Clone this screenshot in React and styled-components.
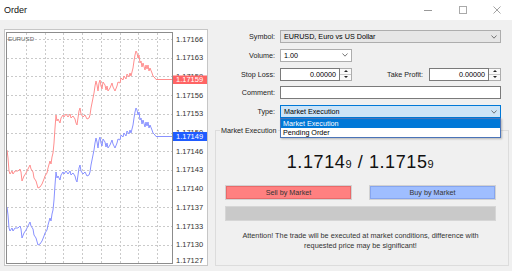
import React from "react";
import styled, { createGlobalStyle } from "styled-components";

const GlobalStyle = createGlobalStyle`
  html, body {
    margin: 0;
    padding: 0;
    background: #f0f0f0;
  }
  body {
    font-family: "Liberation Sans", Arial, sans-serif;
  }
  * {
    box-sizing: border-box;
  }
`;

const Window = styled.div`
  width: 512px;
  height: 271px;
  display: flex;
  flex-direction: column;
  background: #f0f0f0;
  overflow: hidden;
`;

const TitleBar = styled.div`
  height: 20px;
  flex: none;
  display: flex;
  align-items: center;
  padding-left: 4px;
  background: #ffffff;
`;

const Title = styled.span`
  flex: 1;
  font-size: 9px;
  color: #111;
`;

const Controls = styled.div`
  display: flex;
  align-items: center;
  gap: 26.5px;
  padding-right: 11px;
`;

const Body = styled.div`
  flex: 1;
  display: flex;
  padding: 9px 0 5px 4px;
`;

const ChartPanel = styled.div`
  width: 204px;
  height: 237px;
  flex: none;
  background: #ffffff;
  border: 1px solid #c6c6c6;
`;

const FormPanel = styled.div`
  flex: 1;
  display: flex;
  flex-direction: column;
  margin-top: 1px;
  padding-left: 7px;
  font-size: 7.2px;
  color: #222;
`;

const Form = styled.div`
  display: flex;
  flex-direction: column;
  gap: 5.75px;
`;

const Row = styled.div`
  display: flex;
  align-items: center;
  height: 13px;
`;

const Label = styled.span`
  width: ${(p) => p.$width || 65}px;
  padding-right: ${(p) => p.$pad ?? 5}px;
  text-align: right;
  flex: none;
`;

const Field = styled.div`
  position: relative;
  width: ${(p) => p.$width}px;
  height: 13px;
  flex: none;
  display: flex;
  align-items: center;
  justify-content: ${(p) => (p.$right ? "flex-end" : "space-between")};
  padding: 0 3px 0 3px;
  background: ${(p) => p.$bg || "#ffffff"};
  border: 1px solid ${(p) => p.$border || "#7a7a7a"};
  color: #000;
`;

const SpinGroup = styled.div`
  display: flex;
  flex: none;
`;

const Spin = styled.div`
  width: 12px;
  height: 13px;
  display: flex;
  flex-direction: column;
  border: 1px solid #adadad;
  border-left: none;
  background: #fafafa;
`;

const SpinHalf = styled.div`
  flex: 1;
  display: flex;
  align-items: center;
  justify-content: center;
  border-top: ${(p) => (p.$down ? "1px solid #c8c8c8" : "none")};
  &::after {
    content: "";
    border-left: 2px solid transparent;
    border-right: 2px solid transparent;
    ${(p) =>
      p.$down
        ? "border-top: 2px solid #222;"
        : "border-bottom: 2px solid #222;"}
  }
`;

const DropList = styled.div`
  position: absolute;
  top: 12px;
  left: -1px;
  right: -1px;
  z-index: 2;
  background: #ffffff;
  border: 1px solid #4a74b8;
  box-shadow: 1px 1px 2px rgba(0, 0, 0, 0.25);
`;

const DropItem = styled.div`
  height: 9px;
  line-height: 9px;
  padding-left: 2px;
  background: ${(p) => (p.$active ? "#0078d7" : "#ffffff")};
  color: ${(p) => (p.$active ? "#ffffff" : "#000000")};
`;

const GroupBox = styled.div`
  position: relative;
  margin-top: 12px;
  margin-right: 3px;
  height: 136px;
  display: flex;
  flex-direction: column;
  padding: 0 12px 0 9px;
  border: 1px solid #dcdcdc;
`;

const Legend = styled.span`
  position: absolute;
  top: -5.5px;
  left: 4px;
  padding: 0 1px;
  line-height: 10px;
  background: #f0f0f0;
  color: #222;
`;

const Quote = styled.div`
  margin-top: 21px;
  height: 20px;
  line-height: 20px;
  text-align: center;
  font-size: 18px;
  letter-spacing: 0.6px;
  color: #111;
`;

const Pip = styled.span`
  font-size: 11px;
`;

const ButtonRow = styled.div`
  margin-top: 13px;
  display: flex;
  justify-content: space-between;
`;

const TradeButton = styled.div`
  width: 127px;
  height: 15px;
  display: flex;
  align-items: center;
  justify-content: center;
  background: ${(p) => (p.$buy ? "#9fbeff" : "#ff8080")};
  border: 1px solid #d2d2d2;
  box-shadow: inset 0 0 0 1px ${(p) => (p.$buy ? "#86a5ee" : "#e86a6a")};
  color: #333;
`;

const Progress = styled.div`
  margin-top: 6px;
  height: 15px;
  background: #c9c9c9;
  border: 1px solid #d6d6d6;
`;

const Notice = styled.div`
  margin-top: 10px;
  text-align: center;
  line-height: 10px;
  font-size: 7.3px;
  color: #333;
`;

const Chevron = () => (
  <svg width="6" height="4" viewBox="0 0 6 4">
    <polyline points="0.5,0.5 3,3.2 5.5,0.5" fill="none" stroke="#555" strokeWidth="0.8" />
  </svg>
);

// bid line, page coordinates
const bid = [
  [7, 207], [8, 215], [9, 228], [10, 231], [12, 228], [13, 231], [15, 228], [18, 228],
  [20, 226], [21, 229], [22, 238], [24, 233], [26, 230], [28, 226], [30, 222], [31, 226],
  [33, 229], [34, 235], [36, 238], [38, 245], [40, 244], [42, 241], [44, 236], [45, 233],
  [47, 230], [48, 225], [50, 218], [51, 221], [52, 214], [53, 210], [54, 200], [55, 185],
  [56, 172], [57, 178], [58, 176], [60, 180], [61, 175], [63, 172], [64, 174], [66, 171],
  [68, 174], [70, 171], [71, 175], [73, 173], [75, 176], [76, 180], [77, 182], [78, 175],
  [79, 168], [80, 165], [81, 171], [83, 174], [85, 172], [87, 176], [89, 175], [90, 172],
  [91, 165], [92, 160], [93, 155], [94, 150], [95, 143], [96, 138], [97, 142], [98, 148],
  [99, 140], [100, 137], [101, 143], [102, 146], [103, 139], [105, 142], [106, 147],
  [107, 143], [108, 148], [110, 145], [112, 140], [113, 144], [115, 148], [117, 143],
  [118, 139], [120, 140], [121, 135], [123, 137], [124, 133], [126, 136], [127, 131],
  [129, 134], [130, 130], [131, 133], [133, 125], [134, 118], [135, 112], [136, 108],
  [137, 110], [138, 115], [139, 112], [140, 120], [141, 118], [142, 124], [143, 120],
  [145, 127], [146, 122], [147, 126], [148, 122], [149, 128], [150, 125], [152, 130],
  [153, 133], [155, 135], [156, 136.5], [172, 136.5],
];

const levels = [
  "1.17166", "1.17163", "1.17159", "1.17156", "1.17153", "1.17150", "1.17146",
  "1.17143", "1.17140", "1.17137", "1.17133", "1.17130", "1.17127",
];

const toPoints = (shift) =>
  bid.map(([x, y]) => `${x - 5},${y - 30 - shift}`).join(" ");

const Chart = () => (
  <svg width="202" height="235" viewBox="0 0 202 235" style={{ display: "block" }}>
    <defs>
      <clipPath id="plot">
        <rect x="1.5" y="2.5" width="166" height="231" />
      </clipPath>
    </defs>
    <g stroke="#cacaca" strokeWidth="1" strokeDasharray="2 2">
      {levels.slice(0, 12).map((_, i) => (
        <line key={i} x1="2" x2="167" y1={Math.round(9 + 18.7 * i) + 0.5} y2={Math.round(9 + 18.7 * i) + 0.5} />
      ))}
      {Array.from({ length: 8 }).map((_, j) => (
        <line key={j} y1="3" y2="233" x1={Math.round(21 + 18.7 * j) + 0.5} x2={Math.round(21 + 18.7 * j) + 0.5} />
      ))}
    </g>
    <g clipPath="url(#plot)" fill="none" strokeWidth="1">
      <polyline points={toPoints(57)} stroke="#ff8e8e" />
      <polyline points={toPoints(0)} stroke="#8891ff" />
    </g>
    <rect x="1.5" y="2.5" width="166" height="231" fill="none" stroke="#8c8c8c" />
    <text x="3" y="8" fontSize="6.2" fill="#666" fontFamily="Liberation Sans, sans-serif" dominantBaseline="central">
      EURUSD
    </text>
    <g fontSize="7.5" fill="#333" fontFamily="Liberation Sans, sans-serif">
      {levels.map((l, i) => (
        <text key={l} x="171" y={Math.min(9 + 18.7 * i, 230.6)} dominantBaseline="central">
          {l}
        </text>
      ))}
    </g>
    <rect x="168" y="45.5" width="34" height="8.5" fill="#ff6464" />
    <text x="171" y="49.9" fontSize="7.5" fill="#fff" fontFamily="Liberation Sans, sans-serif" dominantBaseline="central">
      1.17159
    </text>
    <rect x="168" y="102" width="34" height="9" fill="#1f5cff" />
    <text x="171" y="106.6" fontSize="7.5" fill="#fff" fontFamily="Liberation Sans, sans-serif" dominantBaseline="central">
      1.17149
    </text>
  </svg>
);

const SpinField = ({ value }) => (
  <SpinGroup>
    <Field $width={60} $right>
      {value}
    </Field>
    <Spin>
      <SpinHalf />
      <SpinHalf $down />
    </Spin>
  </SpinGroup>
);

export default function App() {
  return (
    <>
      <GlobalStyle />
      <Window>
        <TitleBar>
          <Title>Order</Title>
          <Controls>
            <svg width="8" height="8" viewBox="0 0 8 8">
              <line x1="0" x2="8" y1="4.5" y2="4.5" stroke="#999" />
            </svg>
            <svg width="8" height="8" viewBox="0 0 8 8">
              <rect x="0.5" y="0.5" width="7" height="7" fill="none" stroke="#aaa" />
            </svg>
            <svg width="8" height="8" viewBox="0 0 8 8">
              <path d="M0.5 0.5 L7.5 7.5 M7.5 0.5 L0.5 7.5" stroke="#999" strokeWidth="0.9" />
            </svg>
          </Controls>
        </TitleBar>
        <Body>
          <ChartPanel>
            <Chart />
          </ChartPanel>
          <FormPanel>
            <Form>
              <Row>
                <Label>Symbol:</Label>
                <Field $width={221} $bg="#e6e6e6" $border="#adadad">
                  <span>EURUSD, Euro vs US Dollar</span>
                  <Chevron />
                </Field>
              </Row>
              <Row>
                <Label>Volume:</Label>
                <Field $width={72} $border="#adadad">
                  <span>1.00</span>
                  <Chevron />
                </Field>
              </Row>
              <Row>
                <Label>Stop Loss:</Label>
                <SpinField value="0.00000" />
                <Label $width={77} $pad={6}>
                  Take Profit:
                </Label>
                <SpinField value="0.00000" />
              </Row>
              <Row>
                <Label>Comment:</Label>
                <Field $width={221} />
              </Row>
              <Row>
                <Label>Type:</Label>
                <Field $width={221} $bg="#cce4f7" $border="#0078d7">
                  <span>Market Execution</span>
                  <Chevron />
                  <DropList>
                    <DropItem $active>Market Execution</DropItem>
                    <DropItem>Pending Order</DropItem>
                  </DropList>
                </Field>
              </Row>
            </Form>
            <GroupBox>
              <Legend>Market Execution</Legend>
              <Quote>
                1.1714<Pip>9</Pip> / 1.1715<Pip>9</Pip>
              </Quote>
              <ButtonRow>
                <TradeButton>Sell by Market</TradeButton>
                <TradeButton $buy>Buy by Market</TradeButton>
              </ButtonRow>
              <Progress />
              <Notice>
                Attention! The trade will be executed at market conditions, difference with
                <br />
                requested price may be significant!
              </Notice>
            </GroupBox>
          </FormPanel>
        </Body>
      </Window>
    </>
  );
}
